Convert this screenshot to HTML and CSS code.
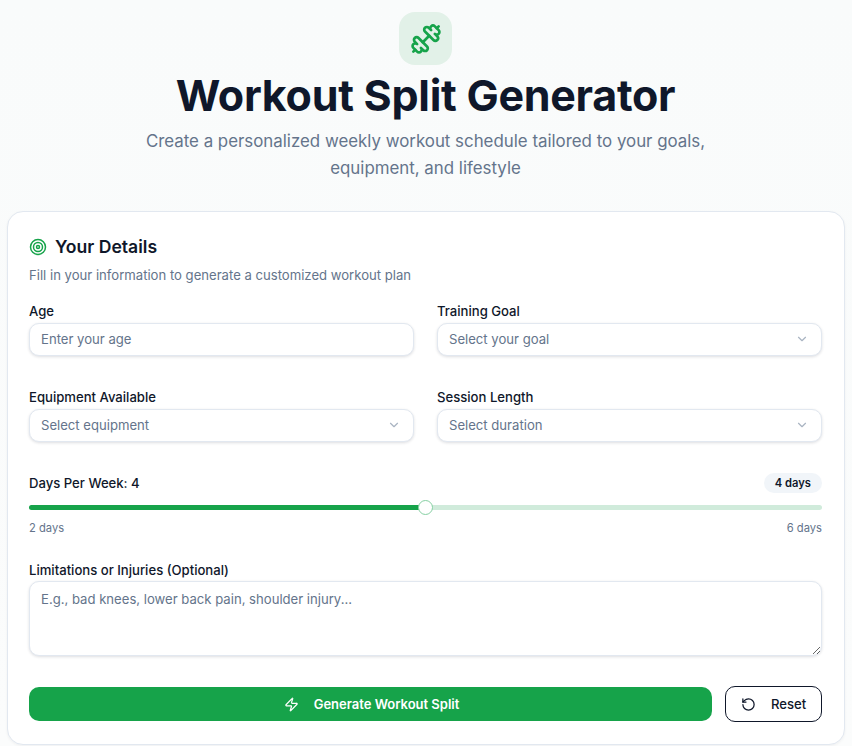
FILE: index.html
```html
<!DOCTYPE html>
<html lang="en">
<head>
    <meta charset="UTF-8">
    <meta name="viewport" content="width=device-width, initial-scale=1.0">
    <title>Workout Split Generator</title>
    <link rel="stylesheet" href="styles.css">
</head>
<body>

    <header class="page-header">
        <div class="logo-box">
            <svg class="logo-icon" viewBox="0 0 24 24" fill="none" stroke="currentColor" stroke-width="2" stroke-linecap="round" stroke-linejoin="round">
                <g transform="matrix(-1 0 0 1 24 0)">
                    <path d="M14.4 14.4 9.6 9.6"/>
                    <path d="M18.657 21.485a2 2 0 1 1-2.829-2.828l-1.767 1.768a2 2 0 1 1-2.829-2.829l6.364-6.364a2 2 0 1 1 2.829 2.829l-1.768 1.767a2 2 0 1 1 2.828 2.829z"/>
                    <path d="m21.5 21.5-1.4-1.4"/>
                    <path d="M3.9 3.9 2.5 2.5"/>
                    <path d="M6.404 12.768a2 2 0 1 1-2.829-2.829l1.768-1.767a2 2 0 1 1-2.828-2.829l2.828-2.828a2 2 0 1 1 2.829 2.828l1.767-1.768a2 2 0 1 1 2.829 2.829z"/>
                </g>
            </svg>
        </div>
        <h1>Workout Split Generator</h1>
        <p class="subtitle">Create a personalized weekly workout schedule tailored to your goals, equipment, and lifestyle</p>
    </header>

    <main class="card">
        <h2 class="card-title">
            <svg class="target-icon" viewBox="0 0 24 24" fill="none" stroke="currentColor" stroke-width="2" stroke-linecap="round" stroke-linejoin="round">
                <circle cx="12" cy="12" r="10"/>
                <circle cx="12" cy="12" r="6"/>
                <circle cx="12" cy="12" r="2"/>
            </svg>
            Your Details
        </h2>
        <p class="card-desc">Fill in your information to generate a customized workout plan</p>

        <div class="form-grid">
            <div class="field">
                <label for="age">Age</label>
                <input id="age" class="control" type="text" placeholder="Enter your age">
            </div>
            <div class="field">
                <label>Training Goal</label>
                <div class="control select">
                    <span>Select your goal</span>
                    <svg class="chevron" viewBox="0 0 24 24" fill="none" stroke="currentColor" stroke-width="2" stroke-linecap="round" stroke-linejoin="round"><path d="m6 9 6 6 6-6"/></svg>
                </div>
            </div>
            <div class="field">
                <label>Equipment Available</label>
                <div class="control select">
                    <span>Select equipment</span>
                    <svg class="chevron" viewBox="0 0 24 24" fill="none" stroke="currentColor" stroke-width="2" stroke-linecap="round" stroke-linejoin="round"><path d="m6 9 6 6 6-6"/></svg>
                </div>
            </div>
            <div class="field">
                <label>Session Length</label>
                <div class="control select">
                    <span>Select duration</span>
                    <svg class="chevron" viewBox="0 0 24 24" fill="none" stroke="currentColor" stroke-width="2" stroke-linecap="round" stroke-linejoin="round"><path d="m6 9 6 6 6-6"/></svg>
                </div>
            </div>
        </div>

        <div class="days">
            <div class="days-head">
                <label>Days Per Week: 4</label>
                <span class="badge">4 days</span>
            </div>
            <div class="slider">
                <div class="slider-fill"></div>
                <div class="slider-thumb"></div>
            </div>
            <div class="days-range">
                <span>2 days</span>
                <span>6 days</span>
            </div>
        </div>

        <div class="field limits">
            <label for="limits">Limitations or Injuries (Optional)</label>
            <textarea id="limits" class="control textarea" placeholder="E.g., bad knees, lower back pain, shoulder injury..."></textarea>
        </div>

        <div class="actions">
            <button class="btn-primary">
                <svg class="btn-icon" viewBox="0 0 24 24" fill="none" stroke="currentColor" stroke-width="2" stroke-linecap="round" stroke-linejoin="round"><path d="M4 14a1 1 0 0 1-.78-1.63l9.9-10.2a.5.5 0 0 1 .86.46l-1.92 6.02A1 1 0 0 0 13 10h7a1 1 0 0 1 .78 1.63l-9.9 10.2a.5.5 0 0 1-.86-.46l1.92-6.02A1 1 0 0 0 11 14z"/></svg>
                Generate Workout Split
            </button>
            <button class="btn-outline">
                <svg class="btn-icon" viewBox="0 0 24 24" fill="none" stroke="currentColor" stroke-width="2" stroke-linecap="round" stroke-linejoin="round"><path d="M3 12a9 9 0 1 0 9-9 9.75 9.75 0 0 0-6.74 2.74L3 8"/><path d="M3 3v5h5"/></svg>
                Reset
            </button>
        </div>
    </main>

</body>
</html>
```

FILE: styles.css
```css
* {
    box-sizing: border-box;
}
html {
    height: 100%;
    overflow: hidden;
}
body {
    margin: 0;
    height: 746px;
    padding: 12px 7px 0 6px;
    font-family: 'Inter', 'Liberation Sans', sans-serif;
    color: #0f172a;
    background: linear-gradient(180deg, #f9fbfb 0%, #fbfcfc 100%);
}
.page-header {
    display: flex;
    flex-direction: column;
    align-items: center;
    text-align: center;
}
.logo-box {
    display: flex;
    align-items: center;
    justify-content: center;
    width: 53px;
    height: 53px;
    border-radius: 16px;
    background-color: #e2f1e8;
}
.logo-icon {
    width: 32px;
    height: 32px;
    color: #16a34a;
}
.page-header h1 {
    margin: 7px 0 0;
    font-size: 43px;
    line-height: 46px;
    font-weight: 700;
    letter-spacing: -0.27px;
    color: #0f172a;
}
.subtitle {
    width: 590px;
    margin: 10px 0 0;
    font-size: 16.87px;
    line-height: 27px;
    color: #64748b;
}
.card {
    height: 534px;
    margin: 29px 0 0 1px;
    padding: 22px 22px 22px 21px;
    background-color: #fff;
    border: 1px solid #e2e8f0;
    border-radius: 16px;
    box-shadow: 0 1px 3px rgba(15, 23, 42, 0.05);
}
.card-title {
    display: flex;
    align-items: center;
    gap: 8px;
    margin: 0;
    font-size: 17.6px;
    line-height: 26px;
    font-weight: 600;
    color: #0f172a;
}
.target-icon {
    width: 18px;
    height: 18px;
    color: #16a34a;
}
.card-desc {
    margin: 5px 0 0;
    font-size: 13.12px;
    line-height: 20px;
    color: #64748b;
}
.form-grid {
    display: grid;
    grid-template-columns: 1fr 1fr;
    column-gap: 23px;
    row-gap: 31px;
    margin-top: 16px;
}
.field label,
.days-head label {
    display: block;
    font-size: 13.12px;
    line-height: 20px;
    font-weight: 500;
    color: #0f172a;
}
.field label {
    margin-bottom: 2px;
}
.control {
    display: block;
    width: 100%;
    height: 33px;
    padding: 0 12px 1px 11px;
    font-family: inherit;
    font-size: 13.12px;
    color: #0f172a;
    background-color: #fff;
    border: 1px solid #e2e8f0;
    border-radius: 10px;
    box-shadow: 0 1px 3px rgba(15, 23, 42, 0.14);
    outline: none;
}
.control::placeholder {
    color: #64748b;
    opacity: 1;
}
.select {
    display: flex;
    align-items: center;
    justify-content: space-between;
    color: #64748b;
}
.chevron {
    width: 14px;
    height: 14px;
    color: #a9b4c2;
}
.days {
    margin-top: 31px;
}
.days-head {
    display: flex;
    align-items: center;
    justify-content: space-between;
}
.badge {
    padding: 2px 11px;
    font-size: 11.2px;
    line-height: 16px;
    font-weight: 600;
    color: #0f172a;
    background-color: #f1f5f9;
    border-radius: 10px;
}
.slider {
    position: relative;
    height: 5px;
    margin-top: 12px;
    background-color: #d0ebdb;
    border-radius: 3px;
}
.slider-fill {
    width: 50%;
    height: 100%;
    background-color: #16a34a;
    border-radius: 3px 0 0 3px;
}
.slider-thumb {
    position: absolute;
    top: -5px;
    left: 389px;
    width: 15px;
    height: 15px;
    background-color: #fff;
    border: 1px solid #86d0a3;
    border-radius: 50%;
}
.days-range {
    display: flex;
    justify-content: space-between;
    margin-top: 10px;
    font-size: 11.2px;
    line-height: 16px;
    color: #64748b;
}
.limits {
    margin-top: 24px;
}
.limits label {
    margin-bottom: 1px;
}
.textarea {
    height: 75px;
    padding: 9px 12px 9px 11px;
    resize: vertical;
}
.actions {
    display: flex;
    gap: 13px;
    margin-top: 30px;
}
.btn-primary,
.btn-outline {
    display: flex;
    align-items: center;
    justify-content: center;
    font-family: inherit;
    font-size: 13.12px;
    font-weight: 600;
    cursor: pointer;
}
.btn-primary {
    flex: 1;
    gap: 15px;
    height: 34px;
    margin-top: 1px;
    padding-left: 8px;
    font-size: 13px;
    color: #fff;
    background-color: #16a34a;
    border: none;
    border-radius: 10px;
}
.btn-outline {
    width: 97px;
    gap: 15px;
    height: 36px;
    font-weight: 500;
    color: #0f172a;
    background-color: #fff;
    border: 1px solid #0f172a;
    border-radius: 10px;
}
.btn-icon {
    width: 15px;
    height: 15px;
}
```
